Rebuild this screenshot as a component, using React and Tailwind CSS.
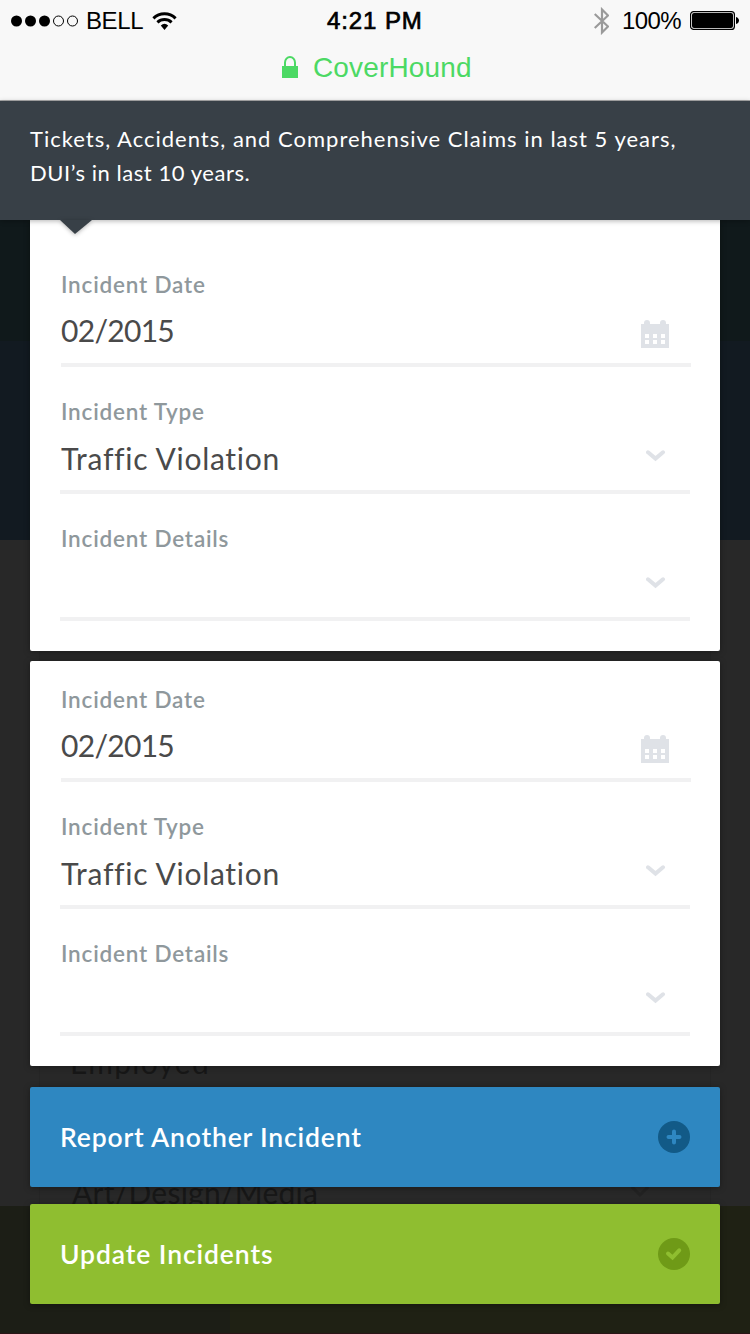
function Calendar() {
  return (
    <svg className="block" width="28" height="28" viewBox="0 0 28 28" fill="#dfe2e7">
      <path fillRule="evenodd" d="M0 4h3V3a3 3 0 0 1 6 0v1h10V3a3 3 0 0 1 6 0v1h3V28H0zM4 14v4h4v-4zM12 14v4h4v-4zM20 14v4h4v-4zM4 20v4h4v-4zM12 20v4h4v-4zM20 20v4h4v-4z" />
    </svg>
  );
}

function Chevron() {
  return (
    <svg className="block" width="20" height="12" viewBox="0 0 20 12" fill="none" stroke="#dfe2e7" strokeWidth="4" strokeLinecap="round">
      <path d="M2 2.300 9.500 8.600l7.500-6.300" />
    </svg>
  );
}

function Field({ label, value, kind }) {
  const isDate = kind === "date";
  return (
    <div className={isDate ? "ml-px -mr-px flex h-[97px] flex-col border-b-4 border-[#f1f1f2]" : "flex h-[97px] flex-col border-b-4 border-[#f1f1f2] pl-px"}>
      <div className="h-7 text-[22.5px] leading-[29px] font-semibold tracking-[0.8px] text-[#8f989c]">{label}</div>
      <div className={isDate ? "mt-3 flex h-10 justify-between pr-[22px]" : "mt-[13px] flex h-10 justify-between pr-6"}>
        <span className={isDate ? "text-[30px] leading-10 tracking-[-0.7px] text-[#4a4a4a]" : "text-[30px] leading-10 tracking-[0.7px] text-[#4a4a4a]"}>{value}</span>
        <span className={isDate ? "mt-2.5" : "mt-3"}>{isDate ? <Calendar /> : <Chevron />}</span>
      </div>
    </div>
  );
}

function Incident({ className }) {
  return (
    <section className={"flex flex-col gap-[30px] bg-white px-[30px] pb-[30px] shadow-[0_1px_6px_rgba(0,0,0,0.35)] " + className}>
      <Field label="Incident Date" value="02/2015" kind="date" />
      <Field label="Incident Type" value="Traffic Violation" kind="select" />
      <Field label="Incident Details" value="" kind="select" />
    </section>
  );
}

function StatusBar() {
  return (
    <div className="flex h-[41px] items-center text-black">
      <div className="flex w-[326px] items-center pl-[11px]">
        <svg width="68" height="12" viewBox="0 0 68 12">
          <circle cx="5.500" cy="6" r="5.500" />
          <circle cx="19.500" cy="6" r="5.500" />
          <circle cx="33.500" cy="6" r="5.500" />
          <circle cx="47.500" cy="6" r="5" fill="none" stroke="#000" />
          <circle cx="61.500" cy="6" r="5" fill="none" stroke="#000" />
        </svg>
        <span className="ml-[7px] w-[58px] text-[24px] leading-[42px] tracking-[-0.4px]">BELL</span>
        <svg className="ml-2" width="26" height="20" viewBox="0 0 26 20" fill="none" stroke="#000" strokeWidth="3">
          <path d="M1.400 7.300a16 16 0 0 1 22.200 0" />
          <path d="M5.400 11.300a10.500 10.500 0 0 1 14.200 0" />
          <path stroke="none" fill="#000" d="M8.800 14.400a5.800 5.800 0 0 1 7.400 0L12.500 19z" />
        </svg>
      </div>
      <span className="w-[268px] pl-px text-[24px] leading-[42px] tracking-[0.9px] [-webkit-text-stroke:0.7px_#000]">4:21 PM</span>
      <svg width="15" height="28" viewBox="0 0 15 28" fill="none" stroke="#9a9a9a" strokeWidth="2.200">
        <path d="M.700 7 14 19.500 8 25.500V2.500l6 6L.700 21" />
      </svg>
      <span className="ml-[13px] w-[60px] text-[24px] leading-[42px] tracking-[-0.6px]">100%</span>
      <svg className="ml-2" width="49" height="20" viewBox="0 0 49 20">
        <rect x=".600" y=".600" width="43.800" height="17.800" rx="3" fill="none" stroke="#000" strokeWidth="1.200" />
        <rect x="2" y="2" width="41" height="15" rx="2" />
        <path d="M46 6c4 1 4 6 0 7z" />
      </svg>
    </div>
  );
}

function PageBeneath() {
  return (
    <div className="absolute inset-0 -z-10 flex flex-col bg-[#282828] pt-[220px]">
      <div className="h-[121px] bg-[#10191b]" />
      <div className="h-[199px] bg-[#121a21]" />
      <div className="mx-[39px] flex h-[666px] flex-col border-x border-[#252525] pl-[30px] text-[30px] leading-10 text-[#171717]">
        <div className="mt-[502px] tracking-[1.3px]">Employed</div>
        <div className="mt-[90px] flex justify-between pr-[60px] pl-0.5 tracking-[0.25px]">
          <span>Art/Design/Media</span>
          <svg className="mt-[13px]" width="20" height="14" viewBox="0 0 20 14" fill="none" stroke="#222" strokeWidth="3">
            <path d="M2 2l8 8 8-8" />
          </svg>
        </div>
      </div>
      <div className="flex flex-1 border-b border-[#2a1416]">
        <div className="w-[230px] bg-[#1c1e16]" />
        <div className="flex-1 bg-[#1f2114]" />
      </div>
    </div>
  );
}

export default function App() {
  return (
    <div className="relative isolate flex h-[1334px] w-[750px] flex-col overflow-hidden font-['Lato',sans-serif]">
      <PageBeneath />
      <header className="h-[101px] border-b border-[#acacac] bg-[#f8f8f8] font-['Liberation_Sans',sans-serif]">
        <StatusBar />
        <div className="flex items-center pl-[282px] text-[#4cd964]">
          <svg className="mb-0.5" width="16" height="22" viewBox="0 0 16 22">
            <path d="M3 11V6.500a5 5.500 0 0 1 10 0V11" fill="none" stroke="#4cd964" strokeWidth="2" />
            <path d="M0 10h16v12H0z" fill="#4cd964" />
          </svg>
          <span className="ml-[15px] text-[28px] leading-[54px] tracking-[0.15px]">CoverHound</span>
        </div>
      </header>
      <div className="relative z-10 h-[119px] bg-[#384047] pt-[21px] pl-[30px] text-[22px] leading-[34px] text-white shadow-[0_1px_5px_rgba(0,0,0,0.3)]">
        <p className="tracking-[1px]">Tickets, Accidents, and Comprehensive Claims in last 5 years,</p>
        <p className="tracking-[0.55px]">DUI’s in last 10 years.</p>
        <svg className="absolute top-[119px] left-[60px] drop-shadow-[0_1px_2px_rgba(0,0,0,0.3)]" width="32" height="15" viewBox="0 0 32 15">
          <path d="M0 0h32L15 14z" fill="#384047" />
        </svg>
      </div>
      <main className="flex flex-col px-[30px]">
        <Incident className="rounded-b-[2px] pt-[50px]" />
        <Incident className="mt-[10px] rounded-[2px] pt-6" />
        <button className="mt-[21px] flex h-[100px] items-center justify-between rounded-[2px] bg-[#2e87c1] px-[30px] text-[26.5px] leading-10 font-semibold tracking-[0.83px] text-white shadow-[0_1px_6px_rgba(0,0,0,0.35)]">
          <span>Report Another Incident</span>
          <svg width="32" height="32" viewBox="0 0 32 32">
            <circle cx="16" cy="16" r="16" fill="#125a87" />
            <path d="M16 10.500v11M10.500 16h11" stroke="#2e87c1" strokeWidth="4" strokeLinecap="round" />
          </svg>
        </button>
        <button className="mt-[17px] flex h-[100px] items-center justify-between rounded-[2px] bg-[#8fbe30] px-[30px] text-[26.5px] leading-10 font-semibold tracking-[0.9px] text-white shadow-[0_1px_6px_rgba(0,0,0,0.35)]">
          <span>Update Incidents</span>
          <svg width="32" height="32" viewBox="0 0 32 32">
            <circle cx="16" cy="16" r="16" fill="#6f9a17" />
            <path d="M10 15.500l4.500 4 6.700-7.200" fill="none" stroke="#8fbe30" strokeWidth="4" strokeLinecap="round" />
          </svg>
        </button>
      </main>
    </div>
  );
}
